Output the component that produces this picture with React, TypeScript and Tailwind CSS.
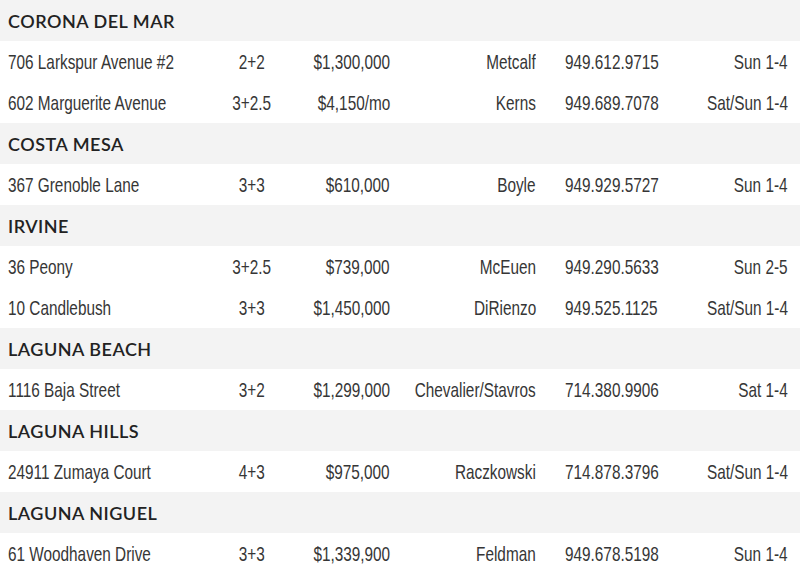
const sections = [
  {
    city: "CORONA DEL MAR",
    rows: [
      ["706 Larkspur Avenue #2", "2+2", "$1,300,000", "Metcalf", "949.612.9715", "Sun 1-4"],
      ["602 Marguerite Avenue", "3+2.5", "$4,150/mo", "Kerns", "949.689.7078", "Sat/Sun 1-4"],
    ],
  },
  {
    city: "COSTA MESA",
    rows: [["367 Grenoble Lane", "3+3", "$610,000", "Boyle", "949.929.5727", "Sun 1-4"]],
  },
  {
    city: "IRVINE",
    rows: [
      ["36 Peony", "3+2.5", "$739,000", "McEuen", "949.290.5633", "Sun 2-5"],
      ["10 Candlebush", "3+3", "$1,450,000", "DiRienzo", "949.525.1125", "Sat/Sun 1-4"],
    ],
  },
  {
    city: "LAGUNA BEACH",
    rows: [["1116 Baja Street", "3+2", "$1,299,000", "Chevalier/Stavros", "714.380.9906", "Sat 1-4"]],
  },
  {
    city: "LAGUNA HILLS",
    rows: [["24911 Zumaya Court", "4+3", "$975,000", "Raczkowski", "714.878.3796", "Sat/Sun 1-4"]],
  },
  {
    city: "LAGUNA NIGUEL",
    rows: [["61 Woodhaven Drive", "3+3", "$1,339,900", "Feldman", "949.678.5198", "Sun 1-4"]],
  },
];

// no condensed face installed, so squeeze Arial-width text horizontally
const Narrow = ({ text, origin }: { text: string; origin: string }) => (
  <span className={`shrink-0 whitespace-nowrap scale-x-[0.73] ${origin}`}>{text}</span>
);

const App = () => {
  return (
    <div className="w-[800px] h-[580px] bg-white overflow-hidden">
      {sections.map((s) => (
        <div key={s.city}>
          <div className="h-[41px] bg-[#f3f3f3] flex items-center pl-2 pt-px text-[18px] font-semibold tracking-[0.5px] text-[#222] [font-family:Lato,sans-serif]">
            {s.city}
          </div>
          {s.rows.map((r) => (
            <div
              key={r[0]}
              className="h-[41px] flex items-center text-[21px] text-[#363636] [font-family:'Liberation_Sans',Arial,sans-serif]"
            >
              <div className="w-[212px] shrink-0 min-w-0 flex pl-2">
                <Narrow text={r[0]} origin="origin-left" />
              </div>
              <div className="w-[80px] shrink-0 min-w-0 flex justify-center">
                <Narrow text={r[1]} origin="origin-center" />
              </div>
              <div className="w-[98px] shrink-0 min-w-0 flex justify-end">
                <Narrow text={r[2]} origin="origin-right" />
              </div>
              <div className="w-[146px] shrink-0 min-w-0 flex justify-end">
                <Narrow text={r[3]} origin="origin-right" />
              </div>
              <div className="w-[130px] shrink-0 min-w-0 flex pl-[29px]">
                <Narrow text={r[4]} origin="origin-left" />
              </div>
              <div className="w-[122px] shrink-0 min-w-0 flex justify-end">
                <Narrow text={r[5]} origin="origin-right" />
              </div>
            </div>
          ))}
        </div>
      ))}
    </div>
  );
};

export default App;
